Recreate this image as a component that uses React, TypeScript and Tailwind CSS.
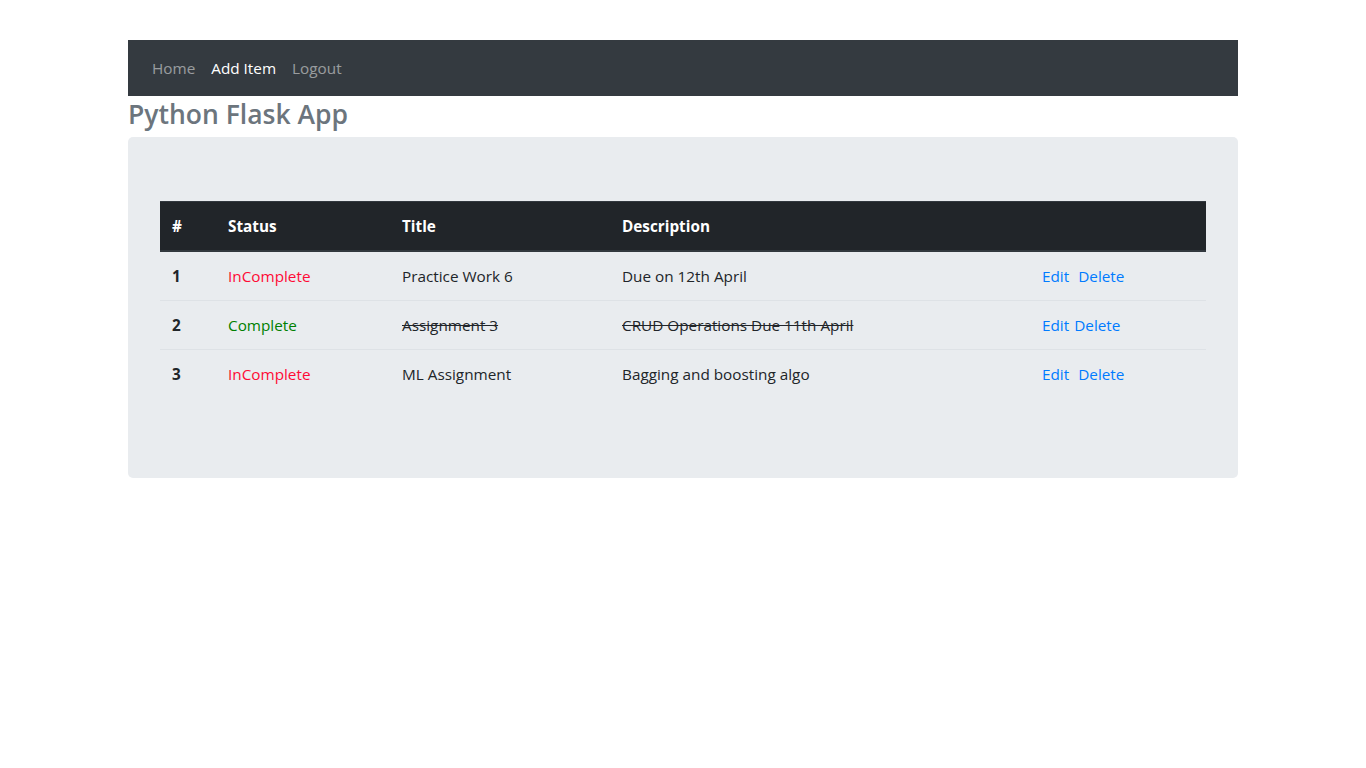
type Task = {
  id: number;
  done: boolean;
  title: string;
  description: string;
};

const tasks: Task[] = [
  { id: 1, done: false, title: "Practice Work 6", description: "Due on 12th April" },
  { id: 2, done: true, title: "Assignment 3", description: "CRUD Operations Due 11th April" },
  { id: 3, done: false, title: "ML Assignment", description: "Bagging and boosting algo" },
];

export default function App() {
  return (
    <div
      className="min-h-screen bg-white text-[15.3px] leading-6 text-[#212529]"
      style={{ fontFamily: '"Open Sans", "Noto Sans", sans-serif' }}
    >
      <div className="mx-auto w-[1110px] pt-10">
        {/* Navbar */}
        <nav className="flex h-14 items-center bg-[#343a40] px-4">
          <a className="px-2 py-2 text-white/50">Home</a>
          <a className="px-2 py-2 text-white">Add Item</a>
          <a className="px-2 py-2 text-white/50">Logout</a>
        </nav>

        <h2 className="mb-[5px] text-[26.5px] font-semibold leading-9 text-[#6c757d]">Python Flask App</h2>

        {/* Jumbotron */}
        <div className="rounded-[5px] bg-[#e9ecef] px-8 py-16">
          <table className="mb-4 w-full border-collapse text-left">
            <thead>
              <tr className="bg-[#212529] text-white">
                <th className="w-[56px] border-t border-b-2 border-[#32383e] p-3 font-bold">#</th>
                <th className="w-[174px] border-t border-b-2 border-[#32383e] p-3 font-bold">Status</th>
                <th className="w-[220px] border-t border-b-2 border-[#32383e] p-3 font-bold">Title</th>
                <th className="w-[420px] border-t border-b-2 border-[#32383e] p-3 font-bold">Description</th>
                <th className="border-t border-b-2 border-[#32383e] p-3"></th>
              </tr>
            </thead>
            <tbody>
              {tasks.map((t, i) => (
                <tr key={t.id}>
                  <th className={`p-3 font-bold ${i > 0 ? "border-t border-[#dee2e6]" : ""}`}>{t.id}</th>
                  <td className={`p-3 ${i > 0 ? "border-t border-[#dee2e6]" : ""} ${t.done ? "text-[#008000]" : "text-[#ff0a35]"}`}>
                    {t.done ? "Complete" : "InComplete"}
                  </td>
                  <td className={`p-3 ${i > 0 ? "border-t border-[#dee2e6]" : ""} ${t.done ? "line-through" : ""}`}>{t.title}</td>
                  <td className={`p-3 ${i > 0 ? "border-t border-[#dee2e6]" : ""} ${t.done ? "line-through" : ""}`}>{t.description}</td>
                  <td className={`p-3 text-[#007bff] ${i > 0 ? "border-t border-[#dee2e6]" : ""}`}>
                    <a>Edit</a>
                    <a className={t.done ? "ml-[5px]" : "ml-[9px]"}>Delete</a>
                  </td>
                </tr>
              ))}
            </tbody>
          </table>
        </div>
      </div>
    </div>
  );
}
